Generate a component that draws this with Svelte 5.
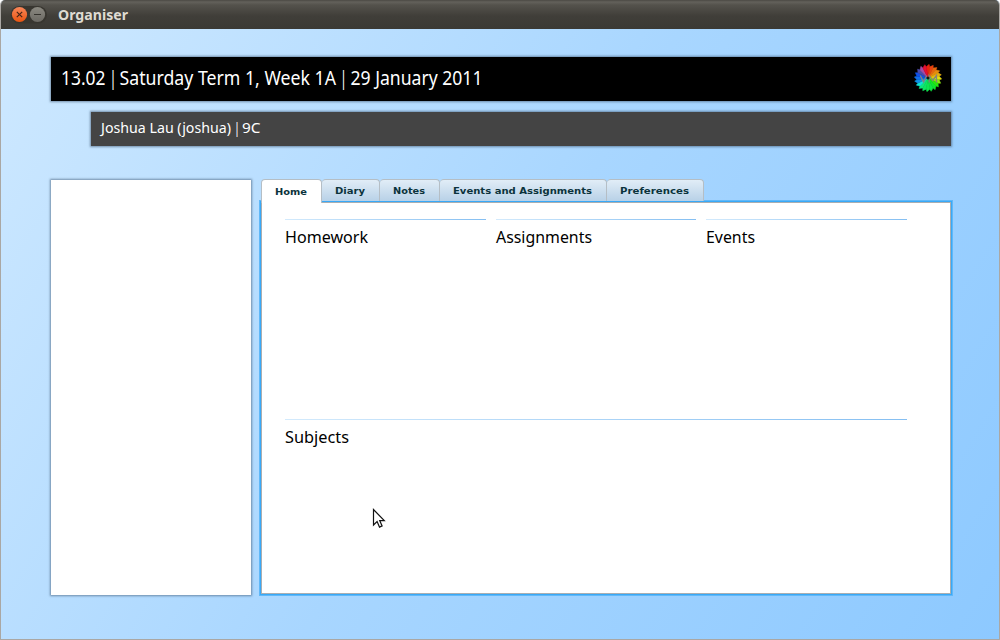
<script>
  const tabs = [
    { name: 'Home', w: 61, tw: 32, active: true },
    { name: 'Diary', w: 58, tw: 30 },
    { name: 'Notes', w: 60, tw: 32 },
    { name: 'Events and Assignments', w: 167, tw: 139 },
    { name: 'Preferences', w: 97, tw: 69 }
  ];
  const sections = [
    { name: 'Homework', w: 83 },
    { name: 'Assignments', w: 96 },
    { name: 'Events', w: 49 }
  ];
  const clock = [
    { text: '13.02', x: 0, w: 44.5 },
    { text: '|', x: 48.5, w: 7 },
    { text: 'Saturday Term 1, Week 1A', x: 58.5, w: 216.5 },
    { text: '|', x: 279, w: 7 },
    { text: '29 January 2011', x: 289.5, w: 132 }
  ];
  const user = [
    { text: 'Joshua Lau (joshua)', x: 0, w: 130 },
    { text: '|', x: 133, w: 6 },
    { text: '9C', x: 141, w: 18.5 }
  ];
  const teeth = 20;
  const hues = [6, 14, 24, 34, 44, 58, 85, 112, 128, 134, 138, 142, 150, 175, 204, 214, 222, 240, 295, 350];
  const point = (r, a) => `${(14 + r * Math.sin(a)).toFixed(2)} ${(14 - r * Math.cos(a)).toFixed(2)}`;
  const wedges = hues.map((hue, i) => {
    const step = (Math.PI * 2) / teeth;
    const a = i * step;
    const saturation = hue > 230 && hue < 330 ? 38 : 88;
    return {
      d: `M14 14L${point(11.3, a - step / 2)}L${point(13.7, a + 0.08)}L${point(11.3, a + step / 2)}Z`,
      fill: `hsl(${hue} ${saturation}% 48%)`
    };
  });
</script>

{#snippet label(text, width, height, baseline)}
  <svg class="label" width={width + 2} {height}>
    <text x="0" y={baseline} textLength={width} lengthAdjust="spacingAndGlyphs">{text}</text>
  </svg>
{/snippet}

{#snippet line(parts, width, height, baseline)}
  <svg class="label" {width} {height}>
    {#each parts as p}<text x={p.x} y={baseline} textLength={p.w} lengthAdjust="spacingAndGlyphs">{p.text}</text>{/each}
  </svg>
{/snippet}

<div class="window">
  <header class="titlebar">
    <div class="buttons">
      <svg width="38" height="18">
        <defs>
          <linearGradient id="close" x2="0" y2="1"><stop stop-color="#f9875a" /><stop offset="1" stop-color="#ea5410" /></linearGradient>
          <linearGradient id="min" x2="0" y2="1"><stop stop-color="#8b8981" /><stop offset="1" stop-color="#6b6963" /></linearGradient>
        </defs>
        <rect x=".5" y="0" width="36.5" height="17.5" rx="8.7" fill="#383630" />
        <circle cx="9.5" cy="8.5" r="7.6" fill="url(#close)" />
        <path d="M6.8 5.8l5.4 5.4M12.2 5.8l-5.4 5.4" stroke="#482517" stroke-width="1.2" />
        <circle cx="27.5" cy="8.5" r="7.6" fill="url(#min)" />
        <path d="M24 8.5h7" stroke="#35332e" stroke-width="1.1" />
      </svg>
    </div>
    {@render label('Organiser', 70, 28, 20)}
  </header>
  <main>
    <div class="clock">
      {@render line(clock, 424, 44, 28)}
      <svg class="logo" width="28" height="28">
        {#each wedges as w}<path d={w.d} fill={w.fill} stroke={w.fill} stroke-width=".5" />{/each}
        <path d="M6.3 11.5l3.2 6.5 3.2-6.5M15.2 18.5v-7l3.5 5 3.8-5v7" fill="none" stroke="#85827c" stroke-width="1.3" />
        <circle cx="14" cy="14" r="1.5" fill="#102015" />
      </svg>
    </div>
    <div class="user">{@render line(user, 162, 34, 21)}</div>
    <div class="columns">
      <aside></aside>
      <div class="book">
        <nav>
          {#each tabs as t}
            <div class="tab" class:active={t.active} style:width="{t.w}px">{@render label(t.name, t.tw, 22, t.active ? 16 : 15)}</div>
          {/each}
        </nav>
        <div class="page">
          <div class="row">
            {#each sections as s}
              <section>{@render label(s.name, s.w, 30, 23)}</section>
            {/each}
          </div>
          <section>{@render label('Subjects', 64, 30, 23)}</section>
        </div>
      </div>
    </div>
  </main>
  <svg class="pointer" width="14" height="21" viewBox="0 0 14 21">
    <path d="M1.5 1.5v15.5l3.6-3.4 2.4 5.5 2.6-1.2-2.4-5.3h4.6z" fill="#fff" stroke="#111" stroke-width="1.2" />
  </svg>
</div>

<style>
  :global(body) { margin: 0; background: #fff; }
  .window { position: relative; box-sizing: border-box; width: 1000px; height: 640px; overflow: hidden; border-radius: 5px 5px 0 0; border: 1px solid #aaa7a3; border-top: 0; background: linear-gradient(122deg, #cfe9ff 0%, #a8d6ff 50%, #8dc9ff 100%); }
  .label { display: block; flex: none; overflow: visible; }
  .titlebar { display: flex; height: 29px; margin: 0 -1px; background: linear-gradient(#4b4944 0, #63615b 2px, #54524c 5px, #403e39 16px, #3b3a35 100%); font: bold 14px "Noto Sans", sans-serif; fill: #dfdbd2; }
  .buttons { width: 48px; padding: 6px 0 0 10px; }
  main { padding: 28px 48px 0 50px; }
  .clock, .user, aside { box-shadow: 0 0 2px 1px rgba(60, 85, 110, .6); }
  .clock { display: flex; justify-content: space-between; height: 44px; padding: 0 9px 0 10px; background: #000; font: 19px "Noto Sans", sans-serif; fill: #fff; }
  .logo { margin-top: 7px; }
  .user { height: 34px; margin: 11px 0 0 40px; padding-left: 10px; background: #444; font: 14.5px "Noto Sans", sans-serif; fill: #fff; }
  .columns { display: flex; gap: 9px; margin-top: 33px; }
  aside { flex: none; width: 200px; height: 415px; margin-top: 1px; background: #fff; }
  .book { flex: none; }
  nav { display: flex; height: 22px; margin-left: 1px; }
  .tab { box-sizing: border-box; display: flex; justify-content: center; height: 22px; padding-left: 1px; border: 1px solid #b5bec5; border-left-width: 0; border-bottom: 0; border-radius: 4px 4px 0 0; background: linear-gradient(#e1edf7, #b8d1e7); font: bold 9.5px "DejaVu Sans", sans-serif; fill: #0b333c; }
  .tab .label { margin-top: -1px; }
  .active { position: relative; height: 24px; border-left-width: 1px; background: #fff; }
  .page { box-sizing: border-box; width: 692px; height: 394px; padding: 17px 0 0 24px; border: 1px solid #38a9f8; box-shadow: 0 0 0 1px #60b8f8, inset 0 0 0 1px #aaaeb1; background: #fff; font: 17px "Noto Sans", sans-serif; fill: #000; }
  .row { display: grid; grid-template-columns: 201px 200px 201px; gap: 10px; height: 200px; }
  section { box-sizing: border-box; width: 622px; background: linear-gradient(90deg, #d3eafc, #85bff2) top / 100% 1px no-repeat; padding-top: 1px; }
  .row section { width: auto; }
  .pointer { position: absolute; left: 371px; top: 508px; }
</style>
